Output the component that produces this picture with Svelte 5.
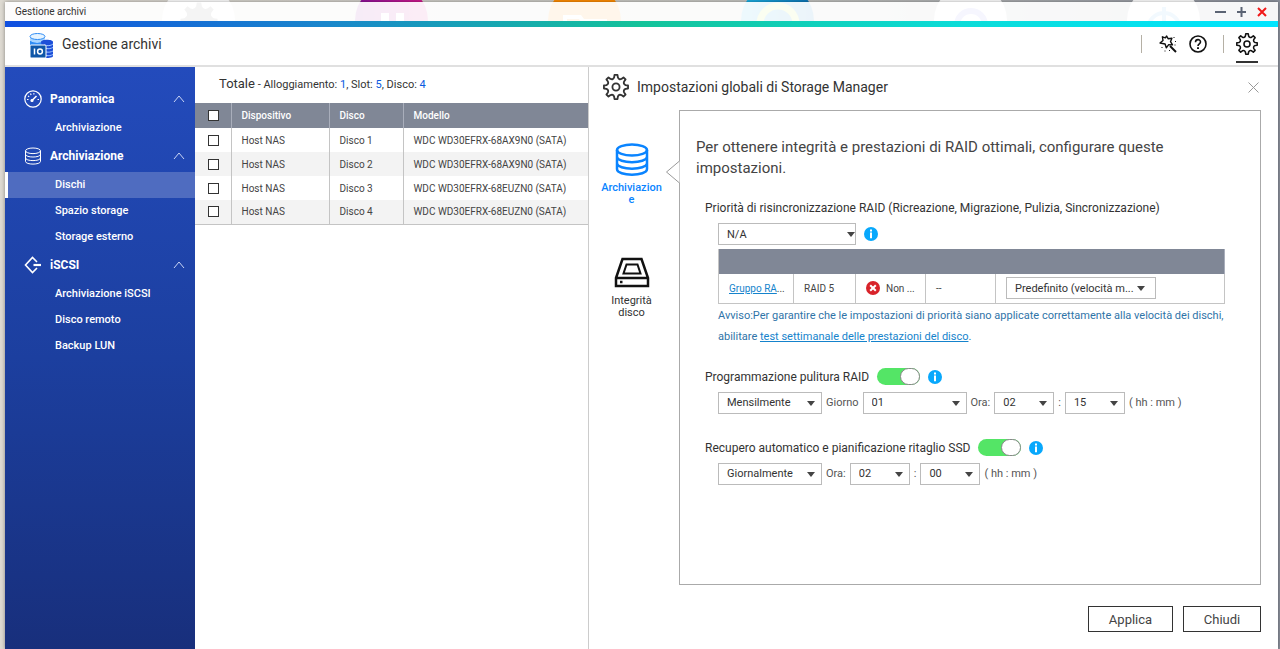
<script>
  const menu = [
    { title: "Panoramica", icon: "gauge", items: ["Archiviazione"] },
    {
      title: "Archiviazione",
      icon: "disks",
      items: ["Dischi", "Spazio storage", "Storage esterno"],
    },
    {
      title: "iSCSI",
      icon: "iscsi",
      items: ["Archiviazione iSCSI", "Disco remoto", "Backup LUN"],
    },
  ];

  let closed = {};
  let current = "Dischi";

  let disks = [
    { host: "Host NAS", name: "Disco 1", model: "WDC WD30EFRX-68AX9N0 (SATA)", checked: false },
    { host: "Host NAS", name: "Disco 2", model: "WDC WD30EFRX-68AX9N0 (SATA)", checked: false },
    { host: "Host NAS", name: "Disco 3", model: "WDC WD30EFRX-68EUZN0 (SATA)", checked: false },
    { host: "Host NAS", name: "Disco 4", model: "WDC WD30EFRX-68EUZN0 (SATA)", checked: false },
  ];

  let tab = "storage";
  let scrubbing = true;
  let trim = true;

  let toggleAll = (e) => {
    disks = disks.map((d) => ({ ...d, checked: e.target.checked }));
  };

  let polar = (deg, r) => {
    const a = (deg * Math.PI) / 180;
    return `${(12 + r * Math.sin(a)).toFixed(2)} ${(12 - r * Math.cos(a)).toFixed(2)}`;
  };

  // outline of an eight-toothed wheel around 12,12 with rounded valleys
  let gearPath = () => {
    let d = "";
    for (let i = 0; i < 8; i++) {
      const a = i * 45;
      d += `${i ? "L" : "M"}${polar(a - 11, 9)}L${polar(a - 7, 11.2)}L${polar(a + 7, 11.2)}L${polar(a + 11, 9)}`;
      d += `Q${polar(a + 22.5, 7)} ${polar(a + 34, 9)}`;
    }
    return d + "Z";
  };
  const gear = gearPath();
</script>

{#snippet gearIcon(size)}
  <svg width={size} height={size} viewBox="0 0 24 24" fill="none" stroke="currentColor" stroke-width="1.7" stroke-linejoin="round">
    <path d={gear} />
    <circle cx="12" cy="12" r="3.3" />
  </svg>
{/snippet}

{#snippet info()}
  <button class="info" aria-label="Info">
    <svg width="14" height="14" viewBox="0 0 14 14">
      <circle cx="7" cy="7" r="7" fill="#08a8fc" />
      <path d="M6 2.6h2v1.8H6zM6 5.6h2v5.6H6z" fill="#fff" />
    </svg>
  </button>
{/snippet}

{#snippet dropdown(id, options, size, label)}
  <span class="dropdown {size}">
    <select {id} aria-label={label}>
      {#each options as option}
        <option>{option}</option>
      {/each}
    </select>
  </span>
{/snippet}

<div class="desktop">
  <div class="shortcuts">
    <span class="white">
      <svg width="40" height="40" viewBox="0 0 24 24" fill="#777"><path d={gear} /></svg>
    </span>
    <span class="purple">
      <svg width="40" height="40" viewBox="0 0 40 40" fill="#fff"><path d="M9 12h8v20H9zM24 12h8v20h-8z" /></svg>
    </span>
    <span class="orange">
      <svg width="46" height="40" viewBox="0 0 46 40" fill="none" stroke="#fff" stroke-width="4"><path d="M3 36V16h15l3 4h22v16z" /></svg>
    </span>
    <span class="blue">
      <svg width="46" height="46" viewBox="0 0 46 46" fill="none" stroke="#c5ee4a" stroke-width="7"><circle cx="23" cy="26" r="18" /></svg>
    </span>
    <span class="white">
      <svg width="40" height="40" viewBox="0 0 40 40" fill="none" stroke="#8a8af0" stroke-width="6"><circle cx="20" cy="24" r="14" /></svg>
    </span>
    <span class="white">
      <svg width="40" height="40" viewBox="0 0 40 40" fill="none" stroke="#5fb4f0" stroke-width="4"><path d="M4 28a16 16 0 0 1 32 0M20 6v16" /></svg>
    </span>
  </div>

  <div class="window">
    <div class="titlebar">
      <span>Gestione archivi</span>
      <div class="controls">
        <button aria-label="Riduci">
          <svg width="11" height="11" viewBox="0 0 11 11"><path d="M0 6h11" stroke="#5b6474" stroke-width="2" /></svg>
        </button>
        <button aria-label="Ingrandisci">
          <svg width="11" height="11" viewBox="0 0 11 11"><path d="M1 6h9M5.5 1v10" stroke="#5b6474" stroke-width="2" /></svg>
        </button>
        <button aria-label="Chiudi finestra">
          <svg width="11" height="11" viewBox="0 0 11 11"><path d="M1 2l8 8M9 2l-8 8" stroke="#f01818" stroke-width="2" /></svg>
        </button>
      </div>
    </div>
    <div class="stripe"></div>

    <header>
      <svg width="26" height="26" viewBox="0 0 26 26">
        <path d="M1 4v16h12V4z" fill="#2f8cf5" />
        <path d="M1 8c4 2.5 10 2.5 15 0V3H1z" fill="#a8d4ff" />
        <ellipse cx="8.5" cy="3.5" rx="7.5" ry="3" fill="#e6f4ff" stroke="#2f8cf5" />
        <path d="M1 8c4 2.5 10 2.5 15 0v3H1z" fill="#2f8cf5" />
        <path d="M12 9c0-3 12-3 12 0v14c0 2-6 2-9 2z" fill="#1d4fd8" />
        <path d="M15 12c3 1 7 1 9-1M17 15.5c3 .5 5 0 7-1M17 19c3 .5 5 0 7-1M17 22.5c3 .5 5 0 7-1" stroke="#9cc3ff" fill="none" />
        <rect x="1" y="12" width="16" height="13" rx="1" fill="#0f57a8" stroke="#fff" />
        <path d="M5.5 15.5v6" stroke="#fff" stroke-width="1.5" />
        <circle cx="11" cy="18.5" r="2.4" stroke="#fff" stroke-width="1.5" fill="none" />
      </svg>
      <h1>Gestione archivi</h1>
      <div class="tools">
        <span class="bar"></span>
        <button aria-label="Procedura guidata">
          <svg width="18" height="18" viewBox="0 0 18 18" fill="none" stroke="#111" stroke-width="1.4" stroke-linejoin="round">
            <path d="M7.5 1l1.8 2.8 3.6-.5-1.4 3.4 2 3.2-3.8-.3-2.4 3.2-1.2-3.8L1 8l3-2.5-.6-3.7 3 1.1z" />
            <path d="M11 11l6 6" stroke-width="2" />
            <path d="M14.5 2.500h1M16 6.500h1M15.500 10h1M2.500 12.500h1M5.500 16h1M10 15.500h1" stroke-width="1.2" />
          </svg>
        </button>
        <button aria-label="Guida">
          <svg width="18" height="18" viewBox="0 0 18 18" fill="none" stroke="#111" stroke-width="1.6">
            <circle cx="9" cy="9" r="8" />
            <path d="M6.5 7.2C6.5 3.8 11.5 3.9 11.5 7c0 1.9-2.5 1.9-2.5 4" />
            <path d="M9 12.2v1.9" stroke-width="2" />
          </svg>
        </button>
        <span class="bar"></span>
        <button class="active" aria-label="Impostazioni">{@render gearIcon(22)}</button>
      </div>
    </header>

    <div class="content">
      <nav>
        {#each menu as group}
          <button class="group" on:click={() => (closed[group.title] = !closed[group.title])}>
            <svg width="18" height="18" viewBox="0 0 18 18" fill="none" stroke="#fff" stroke-width="1.2">
              {#if group.icon === "gauge"}
                <circle cx="9" cy="9" r="8.2" />
                <path d="M8 10.5L12.5 6" stroke-width="1.6" />
                <circle cx="8" cy="10.5" r="1" fill="#fff" />
                <path d="M3 9.5h1.5M4 6l1.2.8M6.5 3.6l.6 1.3M10 3.2l-.2 1.3M13.5 9.5H15" />
              {:else if group.icon === "disks"}
                <g stroke-width="1">
                  <ellipse cx="9" cy="3.8" rx="7.5" ry="2.8" />
                  <path d="M1.5 3.8v10.6c0 3.6 15 3.6 15 0V3.8M1.5 7.3c0 3.6 15 3.6 15 0M1.5 10.9c0 3.6 15 3.6 15 0" />
                </g>
              {:else}
                <path d="M13 6L8.5 1.5 1.5 9l7 7.5L13 12" stroke-width="1.6" />
                <path d="M9.5 9H17" stroke-width="2.2" />
              {/if}
            </svg>
            <span>{group.title}</span>
            <svg width="12" height="8" viewBox="0 0 12 8" fill="none" stroke="#c9d5f5"><path d="M1 7l5-6 5 6" /></svg>
          </button>
          {#if !closed[group.title]}
            <ul>
              {#each group.items as item}
                <li>
                  <a href="#top" class={current === item ? "current" : ""} on:click|preventDefault={() => (current = item)}>{item}</a>
                </li>
              {/each}
            </ul>
          {/if}
        {/each}
      </nav>

      <section class="disks">
        <p class="total">
          <strong>Totale</strong> - Alloggiamento: <b>1</b>, Slot: <b>5</b>, Disco: <b>4</b>
        </p>
        <table>
          <thead>
            <tr>
              <th class="tick"><input type="checkbox" aria-label="Seleziona tutto" on:change={toggleAll} /></th>
              <th class="host">Dispositivo</th>
              <th class="name">Disco</th>
              <th>Modello</th>
            </tr>
          </thead>
          <tbody>
            {#each disks as disk}
              <tr>
                <td class="tick"><input type="checkbox" aria-label={disk.name} bind:checked={disk.checked} /></td>
                <td>{disk.host}</td>
                <td>{disk.name}</td>
                <td>{disk.model}</td>
              </tr>
            {/each}
          </tbody>
        </table>
      </section>

      <section class="settings">
        <div class="heading">
          {@render gearIcon(26)}
          <h2>Impostazioni globali di Storage Manager</h2>
          <button aria-label="Chiudi pannello">
            <svg width="11" height="11" viewBox="0 0 11 11" stroke="#999"><path d="M.5.5l10 10M10.5.5l-10 10" /></svg>
          </button>
        </div>

        <div class="main">
          <div class="tabs">
            <button class={tab === "storage" ? "selected" : ""} on:click={() => (tab = "storage")}>
              <svg width="36" height="34" viewBox="0 0 36 34" fill="none" stroke="currentColor" stroke-width="2.5">
                <ellipse cx="18" cy="7" rx="15" ry="5.5" />
                <path d="M3 7v19c0 7.5 30 7.5 30 0V7M3 13.5c0 7.5 30 7.5 30 0M3 20c0 7.5 30 7.5 30 0" />
              </svg>
              <span>Archiviazione</span>
            </button>
            <button class={tab === "health" ? "selected" : ""} on:click={() => (tab = "health")}>
              <svg width="36" height="34" viewBox="0 0 36 34" fill="none" stroke="#111" stroke-width="2.5">
                <path d="M2 22L8.5 3h19L34 22v8H2zM2 22h32" />
                <path d="M12.5 8.5h11l3 9h-17z" stroke-width="2" />
                <path d="M6 26h2.5" />
              </svg>
              <span>Integrità disco</span>
            </button>
          </div>

          <div class="panel">
            <svg class="notch" width="15" height="24" viewBox="0 0 15 24"><path d="M14.5 1L1.5 12l13 11" fill="#fff" stroke="#999" /></svg>
            <p class="intro">Per ottenere integrità e prestazioni di RAID ottimali, configurare queste impostazioni.</p>

            <div class="line">
              <label for="priority">Priorità di risincronizzazione RAID (Ricreazione, Migrazione, Pulizia, Sincronizzazione)</label>
            </div>
            <div class="fields">
              {@render dropdown("priority", ["N/A"], "wide")}
              {@render info()}
            </div>
            <table class="raid">
              <thead>
                <tr><th colspan="5" aria-label="Gruppi RAID"></th></tr>
              </thead>
              <tbody>
                <tr>
                  <td class="c1"><a href="#top">Gruppo RA</a>...</td>
                  <td class="c2">RAID 5</td>
                  <td class="c3">
                    <span class="state">
                      <svg width="14" height="14" viewBox="0 0 14 14">
                        <circle cx="7" cy="7" r="7" fill="#d8232a" />
                        <path d="M4.2 4.2l5.6 5.6M9.8 4.2L4.2 9.8" stroke="#fff" stroke-width="2" />
                      </svg>
                      Non ...
                    </span>
                  </td>
                  <td class="c4">--</td>
                  <td>{@render dropdown("speed", ["Predefinito (velocità m..."], "speed", "Velocità")}</td>
                </tr>
              </tbody>
            </table>
            <div class="notice">
              <p>Avviso:Per garantire che le impostazioni di priorità siano applicate correttamente alla velocità dei dischi,</p>
              <p>abilitare <a href="#top">test settimanale delle prestazioni del disco</a>.</p>
            </div>

            <div class="line">
              <label for="scrubbing">Programmazione pulitura RAID</label>
              <input id="scrubbing" class="switch" type="checkbox" bind:checked={scrubbing} />
              {@render info()}
            </div>
            <div class="fields">
              {@render dropdown("frequency", ["Mensilmente"], "medium", "Frequenza")}
              <label for="day">Giorno</label>
              {@render dropdown("day", ["01"], "medium")}
              <label for="hour">Ora:</label>
              {@render dropdown("hour", ["02"], "small")}
              <span>:</span>
              {@render dropdown("minute", ["15"], "small", "Minuti")}
              <span>( hh : mm )</span>
            </div>

            <div class="line last">
              <label for="trim">Recupero automatico e pianificazione ritaglio SSD</label>
              <input id="trim" class="switch" type="checkbox" bind:checked={trim} />
              {@render info()}
            </div>
            <div class="fields">
              {@render dropdown("trim-frequency", ["Giornalmente"], "medium", "Frequenza")}
              <label for="trim-hour">Ora:</label>
              {@render dropdown("trim-hour", ["02"], "small")}
              <span>:</span>
              {@render dropdown("trim-minute", ["00"], "small", "Minuti")}
              <span>( hh : mm )</span>
            </div>
          </div>
        </div>

        <footer>
          <button class="apply">Applica</button>
          <button>Chiudi</button>
        </footer>
      </section>
    </div>
  </div>
</div>

<style>
  :global(body) {
    font-family: Roboto, "Liberation Sans", sans-serif;
    font-size: 11px;
    color: #333;
  }

  .desktop,
  .desktop :global(*) {
    box-sizing: border-box;
  }

  .desktop {
    position: relative;
    min-height: 100vh;
    padding: 2px 2px 0 5px;
    display: flex;
    overflow: hidden;
    background: linear-gradient(90deg, #dedad2, #c4c4c0 60%, #8c919c);
  }

  button {
    padding: 0;
    border: none;
    background: none;
    font: inherit;
    color: inherit;
    cursor: pointer;
  }

  svg {
    display: block;
    flex: none;
  }

  h1,
  h2,
  p,
  ul {
    margin: 0;
    padding: 0;
    font-weight: 400;
    list-style: none;
  }

  /* desktop shortcuts showing through the title bar */
  .shortcuts {
    position: absolute;
    top: -16px;
    left: 162px;
    display: flex;
    gap: 120px;
  }

  .shortcuts span {
    width: 73px;
    height: 73px;
    border-radius: 50%;
    display: flex;
    justify-content: center;
    align-items: center;
  }

  .white {
    background: #fff;
  }

  .purple {
    background: linear-gradient(90deg, #8a109c, #d81b8c);
  }

  .orange {
    background: #ff8c00;
  }

  .blue {
    background: linear-gradient(90deg, #1cb5e8, #0b72b5);
  }

  .window {
    position: relative;
    flex: 1;
    display: flex;
    flex-direction: column;
    box-shadow: 0 0 4px rgba(0, 0, 0, 0.4);
  }

  .titlebar {
    height: 19px;
    padding: 0 10px;
    display: flex;
    align-items: center;
    justify-content: space-between;
    background: rgba(255, 255, 255, 0.92);
    font-size: 10px;
  }

  .controls {
    display: flex;
    gap: 10px;
  }

  .stripe {
    height: 6px;
    background: linear-gradient(90deg, #0f4fe0, #1a86cc 25%, #14c39a 50%, #0cdcd8 75%, #00e5ff);
  }

  header {
    height: 40px;
    padding: 0 20px 0 24px;
    display: flex;
    align-items: center;
    gap: 7px;
    background: #fff;
    border-bottom: 2px solid #e0e0e0;
  }

  h1 {
    font-size: 14px;
    padding-bottom: 5px;
  }

  .tools {
    margin-left: auto;
    align-self: stretch;
    display: flex;
    align-items: center;
    gap: 12px;
    padding-bottom: 2px;
    color: #111;
  }

  .tools button {
    padding-bottom: 2px;
  }

  .bar {
    width: 1px;
    height: 18px;
    margin: 0 0 2px 4px;
    background: #b5b0a5;
  }

  .bar:first-child {
    margin: 0 5px 2px 0;
  }

  .tools .active {
    align-self: stretch;
    padding: 0;
    border-bottom: 2px solid #333;
  }

  .content {
    flex: 1;
    display: flex;
    background: #fff;
  }

  nav {
    flex: 0 0 190px;
    padding-top: 17px;
    background: linear-gradient(#234bbc, #1c3f9f 50%, #182f7c);
    color: #fff;
  }

  .group {
    width: 100%;
    height: 30px;
    padding: 0 10px 0 19px;
    display: flex;
    align-items: center;
    gap: 8px;
    font-size: 12px;
    font-weight: 700;
  }

  .group span {
    flex: 1;
    text-align: left;
  }

  nav ul {
    padding-top: 1px;
  }

  nav a {
    display: block;
    height: 26px;
    padding-left: 47px;
    border-left: 3px solid transparent;
    line-height: 26px;
    font-weight: 500;
    color: #fff;
    text-decoration: none;
  }

  nav a.current {
    background: #4f6cc0;
    border-left-color: #fff;
  }

  .disks {
    flex: 0 0 394px;
    border-right: 1px solid #ccc;
  }

  .total {
    height: 36px;
    padding-left: 24px;
    line-height: 34px;
  }

  .total strong {
    font-size: 13px;
    font-weight: 400;
  }

  .total b {
    font-weight: 400;
    color: #0a5be0;
  }

  table {
    width: 100%;
    border-collapse: collapse;
    table-layout: fixed;
    font-size: 10px;
    color: #444;
  }

  th,
  td {
    height: 24px;
    padding: 0 10px;
    border-right: 1px solid #c4c4c4;
    text-align: left;
  }

  th {
    height: 25px;
    background: #808796;
    border-right-color: #a9aebb;
    color: #fff;
    font-weight: 500;
  }

  .disks th:last-child,
  .disks td:last-child {
    border-right: none;
  }

  tbody {
    border-bottom: 1px solid #c4c4c4;
  }

  .disks tbody tr:nth-child(even) {
    background: #f3f3f3;
  }

  .tick {
    width: 36px;
    padding: 0 0 0 13px;
  }

  .host {
    width: 98px;
  }

  .name {
    width: 74px;
  }

  .tick input {
    appearance: none;
    display: block;
    width: 11px;
    height: 11px;
    margin: 0;
    border: 1px solid #333;
    background: #fff;
  }

  .tick input:checked {
    background: #0a84ff;
  }

  .settings {
    flex: 1;
    min-width: 0;
    padding: 0 17px 17px 14px;
    display: flex;
    flex-direction: column;
  }

  .heading {
    height: 43px;
    padding: 0 2px 3px 0;
    display: flex;
    align-items: center;
    gap: 8px;
  }

  h2 {
    flex: 1;
    font-size: 14px;
  }

  .main {
    flex: 1;
    display: flex;
    gap: 16px;
    margin-left: -3px;
  }

  .tabs {
    flex: 0 0 63px;
    padding: 33px 0 0;
    display: flex;
    flex-direction: column;
    gap: 50px;
  }

  .tabs button {
    display: flex;
    flex-direction: column;
    align-items: center;
    gap: 5px;
    line-height: 12px;
  }

  .tabs span {
    width: 63px;
    padding: 0 1px;
    overflow-wrap: anywhere;
  }

  .tabs button:last-child span {
    padding: 0 8px;
  }

  .tabs .selected {
    color: #0a84ff;
    font-weight: 500;
  }

  .panel {
    position: relative;
    flex: 1;
    min-width: 0;
    padding: 26px 35px 20px 25px;
    border: 1px solid #aaa;
  }

  .notch {
    position: absolute;
    left: -15px;
    top: 49px;
  }

  .intro {
    margin-left: -9px;
    margin-bottom: 20px;
    font-size: 15px;
    line-height: 21px;
    color: #444;
  }

  .line {
    height: 18px;
    display: flex;
    align-items: center;
    font-size: 12px;
  }

  .line .switch {
    margin: 0 8px;
  }

  .fields {
    margin: 6px 0 0 13px;
    height: 22px;
    display: flex;
    align-items: center;
    gap: 4px;
    color: #555;
  }

  .info {
    margin-left: 4px;
  }

  .line .info {
    margin-left: 0;
  }

  .dropdown {
    position: relative;
    display: block;
  }

  /* arrow drawn over the end of the select */
  .dropdown::after {
    content: "";
    position: absolute;
    right: 7px;
    top: 9px;
    border: 4px solid transparent;
    border-top: 5px solid #444;
    border-bottom: none;
    pointer-events: none;
  }

  .wide::after {
    right: 1px;
  }

  .speed::after {
    right: 11px;
  }

  .wide {
    width: 138px;
  }

  .medium {
    width: 104px;
  }

  .small {
    width: 60px;
  }

  .speed {
    width: 150px;
  }

  select {
    appearance: none;
    display: block;
    width: 100%;
    height: 22px;
    padding: 0 8px;
    border: 1px solid #bbb;
    border-radius: 0;
    background: #fff;
    font: inherit;
    font-size: 11px;
    color: #333;
  }

  .raid {
    width: auto;
    min-width: 507px;
    margin: 4px 0 0 13px;
    border: 1px solid #c4c4c4;
    border-top: none;
  }

  .raid td {
    height: 29px;
  }

  .raid .c1 {
    width: 75px;
    padding-right: 0;
  }

  .raid .c2 {
    width: 62px;
  }

  .raid .c3,
  .raid .c4 {
    width: 70px;
  }

  .raid .c3 {
    padding-right: 0;
  }

  .state {
    display: flex;
    align-items: center;
    gap: 6px;
  }

  .panel a {
    color: #1583cc;
  }

  .notice {
    margin: 1px 0 21px 13px;
    line-height: 21px;
    color: #2f74a8;
  }

  .last {
    margin-top: 25px;
  }

  .switch {
    appearance: none;
    width: 43px;
    height: 17px;
    border-radius: 9px;
    background: #bbb;
    display: flex;
    cursor: pointer;
  }

  .switch::before {
    content: "";
    box-sizing: border-box;
    width: 20px;
    height: 17px;
    border: 1px solid #888;
    border-radius: 9px;
    background: #fff;
  }

  .switch:checked {
    justify-content: flex-end;
    background: #54e566;
  }

  footer {
    margin-top: 21px;
    display: flex;
    justify-content: flex-end;
    gap: 10px;
  }

  footer button {
    width: 78px;
    height: 26px;
    border: 1px solid #333;
    font-size: 13px;
    color: #444;
  }

  footer .apply {
    width: 85px;
  }
</style>
